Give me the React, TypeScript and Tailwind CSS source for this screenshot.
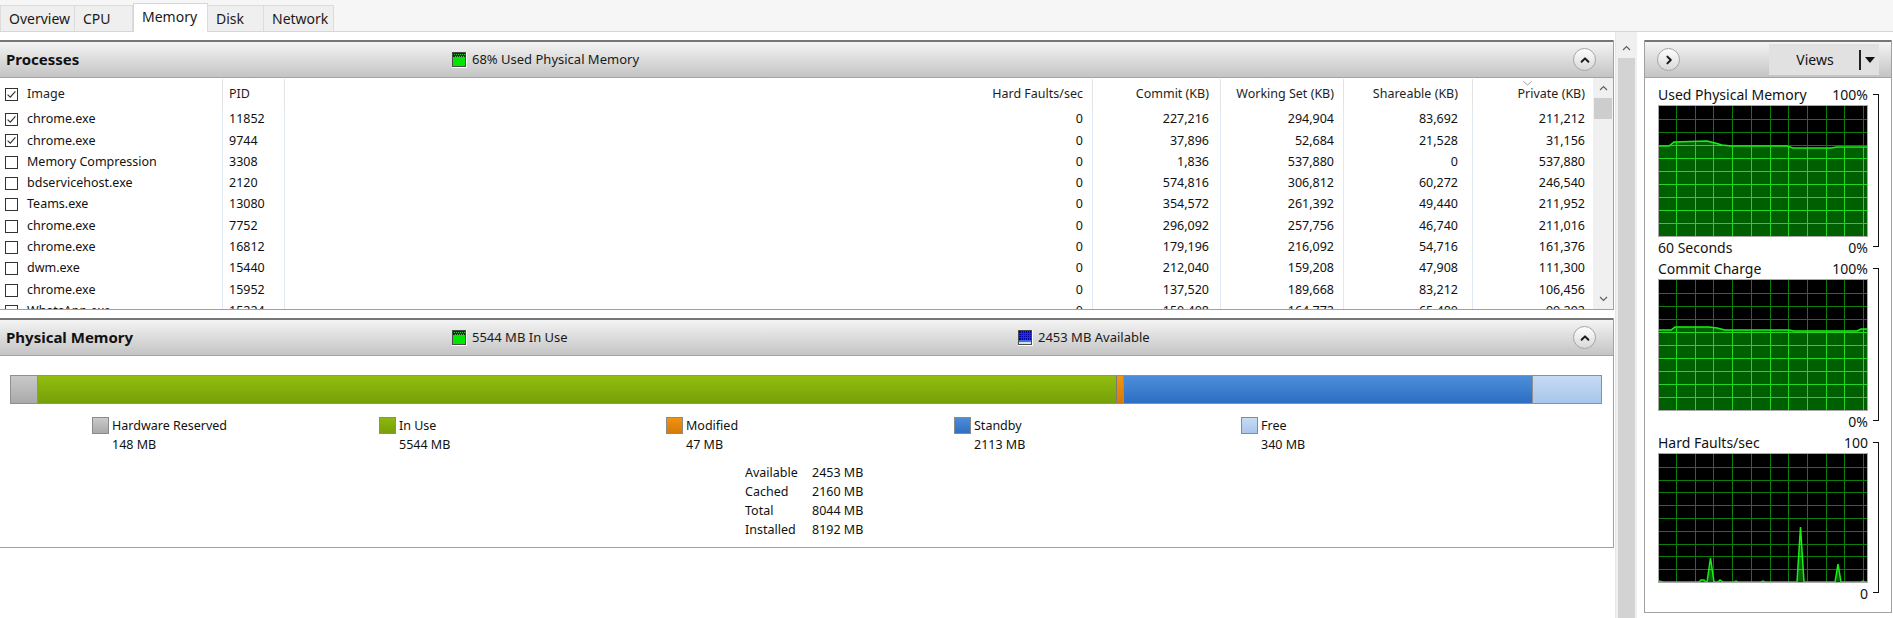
import React from "react";

type Row = [boolean, string, string, string, string, string, string, string];

const rows: Row[] = [
  [true, "chrome.exe", "11852", "0", "227,216", "294,904", "83,692", "211,212"],
  [true, "chrome.exe", "9744", "0", "37,896", "52,684", "21,528", "31,156"],
  [false, "Memory Compression", "3308", "0", "1,836", "537,880", "0", "537,880"],
  [false, "bdservicehost.exe", "2120", "0", "574,816", "306,812", "60,272", "246,540"],
  [false, "Teams.exe", "13080", "0", "354,572", "261,392", "49,440", "211,952"],
  [false, "chrome.exe", "7752", "0", "296,092", "257,756", "46,740", "211,016"],
  [false, "chrome.exe", "16812", "0", "179,196", "216,092", "54,716", "161,376"],
  [false, "dwm.exe", "15440", "0", "212,040", "159,208", "47,908", "111,300"],
  [false, "chrome.exe", "15952", "0", "137,520", "189,668", "83,212", "106,456"],
  [false, "WhatsApp.exe", "15224", "0", "150,408", "164,772", "65,480", "99,292"],
];

function Check({ checked }: { checked: boolean }) {
  return (
    <div className="w-[13px] h-[13px] border border-[#333333] bg-white flex items-center justify-center shrink-0">
      {checked && (
        <svg width="11" height="11" viewBox="0 0 11 11">
          <path d="M1.6 5.6 L4.3 8.2 L9.4 2.3" fill="none" stroke="#333" strokeWidth="1.2" />
        </svg>
      )}
    </div>
  );
}

function RoundBtn({ dir }: { dir: "up" | "right" }) {
  return (
    <div className="w-[23px] h-[23px] rounded-full border border-[#a5a5a5] bg-linear-to-b from-[#fefefe] to-[#d9d9d9] flex items-center justify-center">
      <svg width="12" height="12" viewBox="0 0 12 12">
        {dir === "up" ? (
          <path d="M2.6 7.8 L6 4.4 L9.4 7.8" fill="none" stroke="#1a1a1a" strokeWidth="2" strokeLinecap="round" strokeLinejoin="round" />
        ) : (
          <path d="M4.4 2.6 L7.8 6 L4.4 9.4" fill="none" stroke="#1a1a1a" strokeWidth="2" strokeLinecap="round" strokeLinejoin="round" />
        )}
      </svg>
    </div>
  );
}

function UsedIcon() {
  return (
    <svg width="15" height="16" viewBox="0 0 15 16" className="block">
      <rect x="0" y="0" width="15" height="16" fill="#ffffff" />
      <rect x="0.5" y="0.5" width="13" height="14" fill="#00e600" stroke="#4a4a4a" strokeWidth="1" />
      <rect x="1" y="1" width="12" height="4" fill="#0a300a" />
      {[2, 4, 6, 8, 10, 12].map((x) => (
        <rect key={x} x={x} y="2" width="1" height="1" fill="#38c838" />
      ))}
      {[3, 5, 7, 9, 11].map((x) => (
        <rect key={x} x={x} y="4" width="1" height="1" fill="#38c838" />
      ))}
    </svg>
  );
}

function AvailIcon() {
  return (
    <svg width="15" height="16" viewBox="0 0 15 16" className="block">
      <rect x="0" y="0" width="15" height="16" fill="#ffffff" />
      <rect x="0.5" y="0.5" width="13" height="14" fill="#cfe0f7" stroke="#4a4a4a" strokeWidth="1" />
      <rect x="1" y="1" width="12" height="9" fill="#0000a8" />
      {[3, 5, 7, 9, 11].map((x) => (
        <rect key={"v" + x} x={x} y="1" width="1" height="9" fill="#2a2ad8" />
      ))}
      {[3, 5, 7].map((y) => (
        <rect key={"h" + y} x="1" y={y} width="12" height="1" fill="#2a2ad8" />
      ))}
      <rect x="1" y="10" width="12" height="2" fill="#3d6ee0" />
    </svg>
  );
}

function PanelHeader({ children }: { children: React.ReactNode }) {
  return (
    <div className="h-[38px] border-t-2 border-t-[#767676] border-b border-b-[#a3a3a3] bg-linear-to-b from-[#f4f4f4] to-[#c4c4c4] flex items-center shrink-0">
      {children}
    </div>
  );
}

function Tabs() {
  const tabs = [
    { label: "Overview", w: "w-[75px]" },
    { label: "CPU", w: "w-[59px]" },
    { label: "Memory", w: "w-[75px]", active: true },
    { label: "Disk", w: "w-[57px]" },
    { label: "Network", w: "w-[71px]" },
  ];
  return (
    <div className="h-[32px] bg-[#f6f6f6] border-b border-[#d6d6d6] flex items-end shrink-0 text-[14px] text-[#1a1a1a]">
      {tabs.map((t) =>
        t.active ? (
          <div key={t.label} className={`${t.w} h-[29px] bg-white border border-b-0 border-[#d6d6d6] -mb-px flex items-center pl-[8px] pb-[3px]`}>
            {t.label}
          </div>
        ) : (
          <div key={t.label} className={`${t.w} h-[26px] bg-[#efefef] border border-b-0 border-[#dcdcdc] -ml-px first:ml-0 flex items-center pl-[8px]`}>
            {t.label}
          </div>
        )
      )}
    </div>
  );
}

const cols = "grid grid-cols-[223px_62px_1fr_120px_128px_123px_129px_120px]";

function Processes() {
  return (
    <div className="flex flex-col border-r border-r-[#a0a0a0] border-b border-b-[#a0a0a0] h-[270px] shrink-0">
      <PanelHeader>
        <div className="w-[452px] pl-[6px] font-bold text-[15px] text-[#111]">Processes</div>
        <div className="flex items-center gap-[5px] text-[13px] text-[#1a1a1a]">
          <UsedIcon />
          <span>68% Used Physical Memory</span>
        </div>
        <div className="ml-auto mr-[17px]">
          <RoundBtn dir="up" />
        </div>
      </PanelHeader>
      <div className="flex flex-1 min-h-0">
        <div className="flex-1 flex flex-col min-w-0">
          <div className={`${cols} h-[31px] pt-[1px] shrink-0 text-[12.5px] text-[#1e1e1e]`}>
            <div className="flex items-center pl-[5px] gap-[9px] border-r border-[#e3e3e3]">
              <Check checked />
              <span>Image</span>
            </div>
            <div className="flex items-center pl-[6px] border-r border-[#e3e3e3]">PID</div>
            <div />
            <div className="flex items-center justify-end pr-[9px] border-r border-[#e3e3e3]">Hard Faults/sec</div>
            <div className="flex items-center justify-end pr-[11px] border-r border-[#e3e3e3]">Commit (KB)</div>
            <div className="flex items-center justify-end pr-[9px] border-r border-[#e3e3e3]">Working Set (KB)</div>
            <div className="flex items-center justify-end pr-[14px] border-r border-[#e3e3e3]">Shareable (KB)</div>
            <div className="relative flex items-center justify-end pr-[8px]">
              <svg width="9" height="5" viewBox="0 0 9 5" className="absolute top-[2px] left-[50px]">
                <path d="M0.5 0.5 L4.5 4 L8.5 0.5" fill="none" stroke="#9a9a9a" strokeWidth="1" />
              </svg>
              Private (KB)
            </div>
          </div>
          <div className="flex-1 overflow-hidden">
            {rows.map((r, i) => (
              <div key={i} className={`${cols} h-[21.3px] text-[12.5px] text-[#111]`}>
                <div className="flex items-center pl-[5px] gap-[9px] border-r border-[#dfe8f5] whitespace-nowrap">
                  <Check checked={r[0]} />
                  <span>{r[1]}</span>
                </div>
                <div className="flex items-center pl-[6px] border-r border-[#dfe8f5]">{r[2]}</div>
                <div />
                <div className="flex items-center justify-end pr-[9px] border-r border-[#dfe8f5]">{r[3]}</div>
                <div className="flex items-center justify-end pr-[11px] border-r border-[#dfe8f5]">{r[4]}</div>
                <div className="flex items-center justify-end pr-[9px] border-r border-[#dfe8f5]">{r[5]}</div>
                <div className="flex items-center justify-end pr-[14px] border-r border-[#dfe8f5]">{r[6]}</div>
                <div className="flex items-center justify-end pr-[8px]">{r[7]}</div>
              </div>
            ))}
          </div>
        </div>
        <div className="w-[20px] bg-[#f0f0f0] flex flex-col">
          <div className="h-[20px] flex items-center justify-center">
            <svg width="9" height="6" viewBox="0 0 9 6">
              <path d="M1 5 L4.5 1.5 L8 5" fill="none" stroke="#606060" strokeWidth="1.2" />
            </svg>
          </div>
          <div className="h-[21px] mx-[1px] bg-[#cdcdcd]" />
          <div className="flex-1" />
          <div className="h-[20px] flex items-center justify-center">
            <svg width="9" height="6" viewBox="0 0 9 6">
              <path d="M1 1 L4.5 4.5 L8 1" fill="none" stroke="#606060" strokeWidth="1.2" />
            </svg>
          </div>
        </div>
      </div>
    </div>
  );
}

const legends = [
  { label: "Hardware Reserved", value: "148 MB", sw: "bg-linear-to-b from-[#cacaca] to-[#a9a9a9]" },
  { label: "In Use", value: "5544 MB", sw: "bg-linear-to-b from-[#8cb80e] to-[#78a00a]" },
  { label: "Modified", value: "47 MB", sw: "bg-linear-to-b from-[#f09212] to-[#d97a05]" },
  { label: "Standby", value: "2113 MB", sw: "bg-linear-to-b from-[#4c8cd8] to-[#2f70c4]" },
  { label: "Free", value: "340 MB", sw: "bg-linear-to-b from-[#c8dcf3] to-[#a8c5ea]" },
];

function Physical() {
  return (
    <div className="flex flex-col border-r border-r-[#a0a0a0] border-b border-b-[#a0a0a0] shrink-0">
      <PanelHeader>
        <div className="w-[452px] pl-[6px] font-bold text-[15px] text-[#111]">Physical Memory</div>
        <div className="w-[566px] flex items-center gap-[5px] text-[13px] text-[#1a1a1a]">
          <UsedIcon />
          <span>5544 MB In Use</span>
        </div>
        <div className="flex items-center gap-[5px] text-[13px] text-[#1a1a1a]">
          <AvailIcon />
          <span>2453 MB Available</span>
        </div>
        <div className="ml-auto mr-[17px]">
          <RoundBtn dir="up" />
        </div>
      </PanelHeader>
      <div className="pl-[10px] pt-[19px] pb-[8px] text-[12.5px] text-[#111]">
        <div className="flex w-[1592px] h-[29px] border border-[#8f8f8f]">
          <div className="w-[27px] bg-linear-to-b from-[#c9c9c9] to-[#aaaaaa] border-r border-[#8f8f8f]" />
          <div className="w-[1079px] bg-linear-to-b from-[#92bd0f] to-[#76a009] border-r border-[#7a7a7a]" />
          <div className="w-[7px] bg-linear-to-b from-[#f29512] to-[#d87805] border-r border-[#8f8f8f]" />
          <div className="w-[409px] bg-linear-to-b from-[#4d8edb] to-[#2d6ec3] border-r border-[#8f8f8f]" />
          <div className="flex-1 bg-linear-to-b from-[#c6dbf3] to-[#a8c6eb]" />
        </div>
        <div className="flex pl-[82px] mt-[12px]">
          {legends.map((l, i) => (
            <div key={l.label} className={`${i === 2 ? "w-[288px]" : "w-[287px]"} flex gap-[3px]`}>
              <div className={`w-[17px] h-[17px] mt-[1px] border border-[#8a8a8a] ${l.sw}`} />
              <div className="flex flex-col leading-[19px]">
                <span>{l.label}</span>
                <span>{l.value}</span>
              </div>
            </div>
          ))}
        </div>
        <div className="ml-[735px] mt-[9px] grid grid-cols-[67px_auto] leading-[19px] w-[160px]">
          <span>Available</span>
          <span>2453 MB</span>
          <span>Cached</span>
          <span>2160 MB</span>
          <span>Total</span>
          <span>8044 MB</span>
          <span>Installed</span>
          <span>8192 MB</span>
        </div>
      </div>
    </div>
  );
}

function OuterScroll() {
  return (
    <div className="w-[22px] ml-[1px] bg-[#f0f0f0] flex flex-col border-l border-[#e6e6e6]">
      <div className="h-[24px] flex items-center justify-center pt-[8px]">
        <svg width="9" height="6" viewBox="0 0 9 6">
          <path d="M1 5 L4.5 1.5 L8 5" fill="none" stroke="#606060" strokeWidth="1.2" />
        </svg>
      </div>
      <div className="flex-1 mx-[2px] mt-[2px] bg-[#d3d3d3]" />
    </div>
  );
}

type Pt = [number, number];

function Graph({ w, h, points, fillId }: { w: number; h: number; points: Pt[]; fillId: string }) {
  const vlines: number[] = [];
  for (let x = 17; x < w; x += 18.7) vlines.push(Math.round(x) + 0.5);
  const hlines: number[] = [];
  for (let i = 1; i < 10; i++) hlines.push(Math.round((h * i) / 10) + 0.5);
  const poly = `0,${h} ${points.map((p) => p.join(",")).join(" ")} ${w},${h}`;
  const line = points.map((p) => p.join(",")).join(" ");
  const grid = (
    <>
      {vlines.map((x) => (
        <line key={"v" + x} x1={x} y1={0} x2={x} y2={h} />
      ))}
      {hlines.map((y) => (
        <line key={"h" + y} x1={0} y1={y} x2={w} y2={y} />
      ))}
    </>
  );
  return (
    <svg width={w} height={h} viewBox={`0 0 ${w} ${h}`} className="block">
      <defs>
        <clipPath id={fillId}>
          <polygon points={poly} />
        </clipPath>
      </defs>
      <rect width={w} height={h} fill="#000" />
      <g stroke="#0b7d0b" strokeWidth="1">{grid}</g>
      <polygon points={poly} fill="#005f00" />
      <g stroke="#22d622" strokeWidth="1" clipPath={`url(#${fillId})`}>
        {grid}
      </g>
      <polyline points={line} fill="none" stroke="#17f017" strokeWidth="1.5" />
    </svg>
  );
}

function GraphSection({
  title,
  top,
  bottomLeft,
  bottomRight,
  children,
}: {
  title: string;
  top: string;
  bottomLeft?: string;
  bottomRight: string;
  children: React.ReactNode;
}) {
  return (
    <div className="relative pr-[23px] text-[14px] text-[#111]">
      <div className="h-[22px] flex items-center justify-between">
        <span>{title}</span>
        <span>{top}</span>
      </div>
      <div className="border border-[#a8a8a8] w-[210px]">{children}</div>
      <div className="h-[20px] flex items-center justify-between">
        <span>{bottomLeft ?? ""}</span>
        <span>{bottomRight}</span>
      </div>
      <div className="absolute right-[12px] top-[11px] bottom-[10px] w-[6px] border-t border-r border-b border-[#111]" />
    </div>
  );
}

function RightPanel() {
  const g1: Pt[] = [
    [0, 40], [10, 40], [15, 36], [48, 35], [56, 37], [63, 39], [72, 40], [128, 40], [134, 42], [172, 42], [178, 41], [208, 41],
  ];
  const g2: Pt[] = [
    [0, 50], [12, 50], [16, 47], [50, 47], [58, 48], [66, 50], [130, 50], [135, 51], [198, 51], [202, 49], [208, 49],
  ];
  const g3: Pt[] = [
    [0, 127], [4, 128], [40, 128], [42, 126], [45, 126], [47, 128], [48, 128], [51.5, 104], [55, 128], [59, 128], [61, 126], [64, 128],
    [75, 128], [77, 127], [79, 128], [102, 128], [104, 127], [106, 128], [138, 128], [141.5, 73], [145, 128], [176, 128], [179, 110],
    [182, 128], [202, 128], [204, 127], [206, 128], [208, 128],
  ];
  return (
    <div className="w-[248px] mt-[8px] mb-[5px] border-r border-l border-b border-[#a0a0a0] flex flex-col">
      <PanelHeader>
        <div className="pl-[12px]">
          <RoundBtn dir="right" />
        </div>
        <div className="ml-auto mr-[12px] w-[110px] h-[31px] bg-[#e1e1e1] flex items-center text-[14px] text-[#111]">
          <span className="flex-1 text-center pl-[2px]">Views</span>
          <div className="w-[2px] h-[20px] bg-[#222]" />
          <svg width="18" height="10" viewBox="0 0 18 10">
            <path d="M4 2 L14 2 L9 8 Z" fill="#111" />
          </svg>
        </div>
      </PanelHeader>
      <div className="pl-[13px] pt-[5px] flex flex-col">
        <GraphSection title="Used Physical Memory" top="100%" bottomLeft="60 Seconds" bottomRight="0%">
          <Graph w={208} h={130} points={g1} fillId="g1clip" />
        </GraphSection>
        <GraphSection title="Commit Charge" top="100%" bottomRight="0%">
          <Graph w={208} h={130} points={g2} fillId="g2clip" />
        </GraphSection>
        <GraphSection title="Hard Faults/sec" top="100" bottomRight="0">
          <Graph w={208} h={128} points={g3} fillId="g3clip" />
        </GraphSection>
      </div>
    </div>
  );
}

export default function App() {
  return (
    <div className="w-[1893px] h-[618px] overflow-hidden bg-white text-black font-['Segoe_UI','Noto_Sans',sans-serif] text-[12.5px] flex flex-col">
      <Tabs />
      <div className="flex flex-1 min-h-0">
        <div className="w-[1614px] flex flex-col pt-[8px]">
          <Processes />
          <div className="h-[8px] shrink-0" />
          <Physical />
        </div>
        <OuterScroll />
        <div className="w-[7px]" />
        <RightPanel />
      </div>
    </div>
  );
}
